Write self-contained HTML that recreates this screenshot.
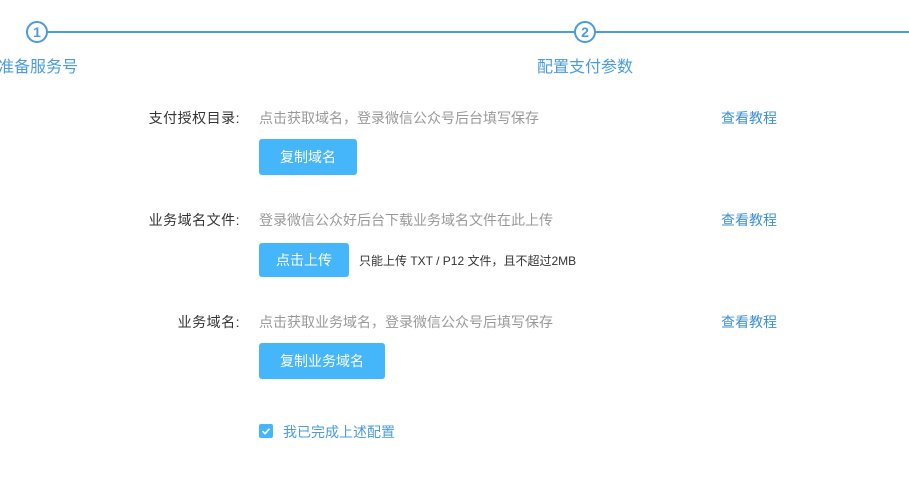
<!DOCTYPE html>
<html><head><meta charset="utf-8"><style>
body{margin:0;width:909px;height:482px;background:#fff;font-family:"Liberation Sans","Noto Sans CJK SC",sans-serif;position:relative;overflow:hidden}
.a{position:absolute;white-space:nowrap}
.line{position:absolute;height:2px;background:#4a9be0;top:31px}
.c{position:absolute;width:18px;height:18px;border:2px solid #4a9be0;border-radius:50%;background:#fff;color:#4a9be0;font-size:14px;font-weight:bold;text-align:center;line-height:18px;top:21px}
.st{color:#4a9be0;font-size:16px;top:53px}
.lb{font-size:14px;color:#333;text-align:right;width:160px;left:80px;letter-spacing:0.5px}
.d{font-size:14px;color:#999;left:259px}
.lk{font-size:14px;color:#3d8fd6;left:721px}
.btn{position:absolute;background:#45b6fa;color:#fff;font-size:14px;border-radius:3px;text-align:center;left:259px}
</style></head><body>
<div class="line" style="left:47px;width:528px"></div>
<div class="line" style="left:595px;width:314px"></div>
<div class="c" style="left:26px">1</div>
<div class="c" style="left:574px">2</div>
<div class="a st" style="left:-2px">准备服务号</div>
<div class="a st" style="left:537px">配置支付参数</div>

<div class="a lb" style="top:108px">支付授权目录:</div>
<div class="a d" style="top:108px">点击获取域名，登录微信公众号后台填写保存</div>
<div class="a lk" style="top:108px">查看教程</div>
<div class="btn" style="top:139px;width:98px;height:36px;line-height:36px">复制域名</div>

<div class="a lb" style="top:210px">业务域名文件:</div>
<div class="a d" style="top:210px">登录微信公众好后台下载业务域名文件在此上传</div>
<div class="a lk" style="top:210px">查看教程</div>
<div class="btn" style="top:243px;width:90px;height:34px;line-height:34px">点击上传</div>
<div class="a" style="left:359px;top:252px;font-size:12px;color:#333">只能上传 TXT / P12 文件，且不超过2MB</div>

<div class="a lb" style="top:312px">业务域名:</div>
<div class="a d" style="top:312px">点击获取业务域名，登录微信公众号后填写保存</div>
<div class="a lk" style="top:312px">查看教程</div>
<div class="btn" style="top:343px;width:126px;height:36px;line-height:36px">复制业务域名</div>

<div class="a" style="left:259px;top:424px;width:14px;height:14px;background:#45b6fa;border-radius:2px"><svg width="14" height="14"><path d="M3.5 7.2l2.5 2.5 4.5-5" stroke="#fff" stroke-width="1.6" fill="none"/></svg></div>
<div class="a" style="left:283px;top:422px;font-size:14px;color:#4a9be0">我已完成上述配置</div>
</body></html>
